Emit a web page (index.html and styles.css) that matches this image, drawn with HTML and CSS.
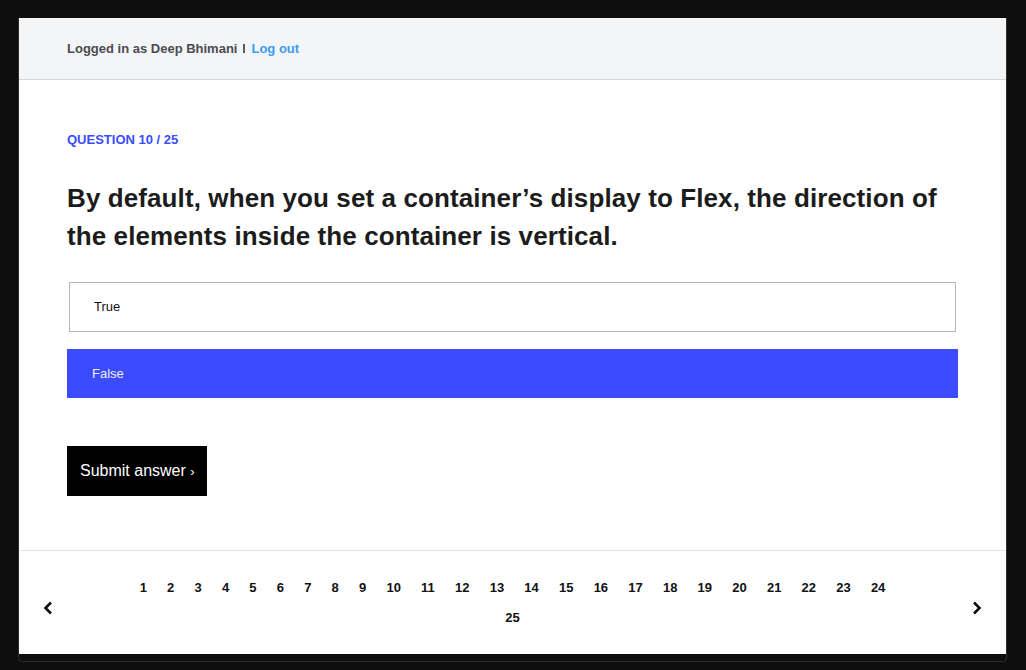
FILE: index.html
```html
<!DOCTYPE html>
<html lang="en">
<head>
<meta charset="utf-8">
<title>Quiz</title>
<link rel="stylesheet" href="styles.css">
</head>
<body>
<div class="frame">
  <div class="app">
    <header class="topbar">
      <span class="user">Logged in as Deep Bhimani</span>
      <span class="sep"></span>
      <a class="logout" href="#">Log out</a>
    </header>
    <main class="quiz">
      <div class="qnum">QUESTION 10 / 25</div>
      <h1 class="question">By default, when you set a container’s display to Flex, the direction of the elements inside the container is vertical.</h1>
      <div class="options">
        <div class="option">True</div>
        <div class="option selected">False</div>
      </div>
      <button class="submit">Submit answer <span class="chev">›</span></button>
    </main>
    <footer class="pager">
      <svg class="arrow" width="10" height="14" viewBox="0 0 10 14"><path d="M8 1.5 L2.5 7 L8 12.5" fill="none" stroke="#111" stroke-width="2.6" stroke-linejoin="miter"/></svg>
      <div class="pages">
        <span class="page">1</span><span class="page">2</span><span class="page">3</span><span class="page">4</span><span class="page">5</span><span class="page">6</span><span class="page">7</span><span class="page">8</span><span class="page">9</span><span class="page">10</span><span class="page">11</span><span class="page">12</span><span class="page">13</span><span class="page">14</span><span class="page">15</span><span class="page">16</span><span class="page">17</span><span class="page">18</span><span class="page">19</span><span class="page">20</span><span class="page">21</span><span class="page">22</span><span class="page">23</span><span class="page">24</span><span class="page">25</span>
      </div>
      <svg class="arrow" width="10" height="14" viewBox="0 0 10 14"><path d="M2 1.5 L7.5 7 L2 12.5" fill="none" stroke="#111" stroke-width="2.6" stroke-linejoin="miter"/></svg>
    </footer>
  </div>
</div>
</body>
</html>
```
FILE: styles.css
```css
* { box-sizing: border-box; }
html, body { margin: 0; padding: 0; }
body {
  background: #0e0e0e;
  font-family: "Liberation Sans", Arial, sans-serif;
  width: 1026px;
  height: 670px;
  overflow: hidden;
}
.frame {
  margin: 18px 0 0 18px;
  width: 989px;
  border: 1px solid #2f2f2f;
  border-top: none;
  border-radius: 0 0 5px 5px;
  padding-bottom: 7px;
  background: #0e0e0e;
}
.app {
  background: #fff;
}
.topbar {
  height: 62px;
  background: #f4f5f7;
  border-bottom: 1px solid #d6d7d9;
  display: flex;
  align-items: center;
  padding: 0 48px 1px;
  font-size: 13px;
  font-weight: bold;
}
.user { color: #4a4b53; }
.sep {
  display: inline-block;
  width: 2px;
  height: 9px;
  background: #5a5b62;
  margin: 0 6px 0 6px;
}
.logout {
  color: #3c9bf3;
  text-decoration: none;
}
.quiz {
  padding: 52px 48px 54px;
}
.qnum {
  color: #3b4cff;
  font-size: 13px;
  font-weight: bold;
  line-height: 16px;
}
.question {
  margin: 31px 0 27px;
  font-size: 26px;
  line-height: 38px;
  font-weight: bold;
  letter-spacing: 0.1px;
  color: #1c1c1c;
}
.options {
  display: flex;
  flex-direction: column;
  gap: 17px;
}
.option {
  height: 50px;
  margin: 0 2px;
  border: 1px solid #b6b6b6;
  display: flex;
  align-items: center;
  padding: 0 24px 1px;
  font-size: 13px;
  color: #111;
}
.option.selected {
  height: 49px;
  margin: 0;
  border: none;
  background: #3c4bfd;
  color: #eef0ff;
  padding: 0 25px;
}
.submit {
  margin-top: 48px;
  width: 140px;
  height: 50px;
  background: #000;
  color: #fff;
  border: none;
  padding: 0 0 0 13px;
  font-family: "Liberation Sans", Arial, sans-serif;
  font-size: 16px;
  text-align: left;
  white-space: nowrap;
  display: block;
}
.chev { font-size: 13px; }
.pager {
  height: 104px;
  border-top: 1px solid #e0e5e5;
  display: flex;
  justify-content: space-between;
  align-items: center;
  padding: 0 24px;
}
.arrow {
  display: block;
  margin-top: 10px;
}
.pages {
  width: 780px;
  display: flex;
  flex-wrap: wrap;
  justify-content: center;
}
.page {
  padding: 0 10.1px;
  line-height: 30px;
  font-size: 13px;
  font-weight: bold;
  color: #111;
}
```
